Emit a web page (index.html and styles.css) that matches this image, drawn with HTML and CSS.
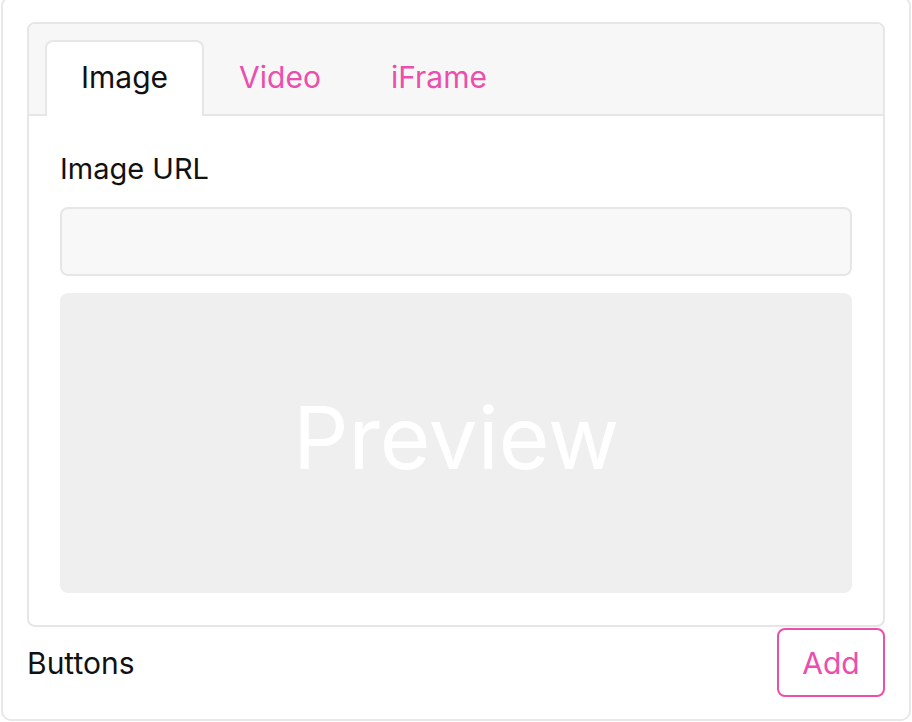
FILE: index.html
```html
<!DOCTYPE html>
<html lang="en">
<head>
  <meta charset="UTF-8" />
  <meta name="viewport" content="width=device-width, initial-scale=1.0"/>
  <title>Media block</title>
  <link rel="stylesheet" href="styles.css">
</head>
<body>
  <div class="card">
    <div class="tabs">
      <div class="tab-list">
        <button class="tab active">Image</button>
        <button class="tab">Video</button>
        <button class="tab">iFrame</button>
      </div>
      <div class="tab-panel">
        <label class="field-label" for="image-url">Image URL</label>
        <input class="field-input" id="image-url" type="text">
        <div class="preview">Preview</div>
      </div>
    </div>
    <div class="buttons-row">
      <span class="buttons-label">Buttons</span>
      <button class="add-btn">Add</button>
    </div>
  </div>
</body>
</html>
```

FILE: styles.css
```css
body {
  margin: 0;
  background: #fff;
  font-family: Inter, "Noto Sans", sans-serif;
  color: #111;
}
.card {
  margin: -4px 1px 0;
  padding: 24px 24px 22px;
  border: 2px solid #e8e8e8;
  border-radius: 10px;
}
.tabs {
  border: 2px solid #e6e6e6;
  border-radius: 8px;
  overflow: hidden;
}
.tab-list {
  display: flex;
  background: #f7f7f7;
  padding: 16px 16px 0;
  border-bottom: 2px solid #e6e6e6;
}
.tab {
  font: inherit;
  font-size: 30px;
  color: #ec4ead;
  background: none;
  border: 2px solid transparent;
  border-bottom: none;
  border-radius: 8px 8px 0 0;
  padding: 0 33px 4px;
  height: 76px;
  margin-bottom: -2px;
  cursor: pointer;
}
.tab.active {
  padding: 0 34px 4px;
  color: #111;
  background: #fff;
  border-color: #e6e6e6;
}
.tab-panel {
  padding: 35px 31px 32px;
  display: flex;
  flex-direction: column;
}
.field-label {
  font-size: 29px;
  line-height: 36px;
  margin-bottom: 20px;
}
.field-input {
  height: 69px;
  box-sizing: border-box;
  background: #f8f8f8;
  border: 2px solid #e6e6e6;
  border-radius: 8px;
}
.preview {
  margin-top: 17px;
  height: 300px;
  box-sizing: border-box;
  padding-bottom: 12px;
  background: #efefef;
  border-radius: 8px;
  display: flex;
  align-items: center;
  justify-content: center;
  color: #fff;
  font-size: 87px;
}
.buttons-row {
  margin-top: 1px;
  display: flex;
  justify-content: space-between;
  align-items: center;
}
.buttons-label {
  font-size: 30px;
}
.add-btn {
  font: inherit;
  font-size: 30px;
  color: #ec4ead;
  background: #fff;
  border: 2px solid #ec4ead;
  border-radius: 8px;
  width: 108px;
  height: 69px;
  cursor: pointer;
}
```
